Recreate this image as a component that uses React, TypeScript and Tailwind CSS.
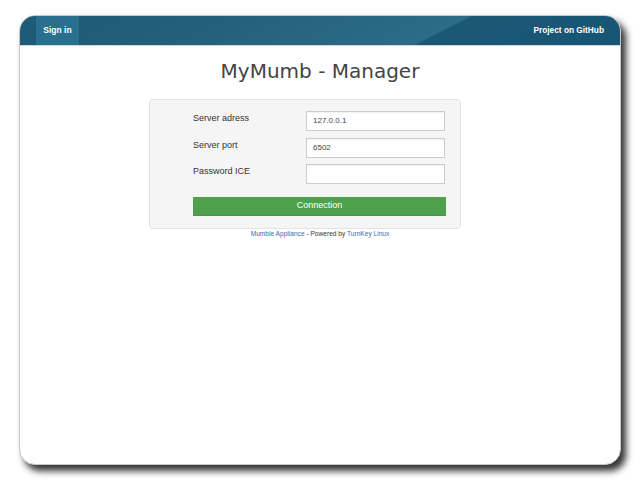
import React from "react";

export default function App() {
  const font = { fontFamily: '"DejaVu Sans", "Liberation Sans", sans-serif' };
  const lib = { fontFamily: '"Liberation Sans", Arial, sans-serif' };
  return (
    <div className="w-[640px] h-[480px] bg-white pt-[15px] pl-[19px]" style={font}>
      <div className="w-[602px] h-[450px] rounded-[16px] overflow-hidden bg-white border border-[#c8c8c8] shadow-[5px_6px_7px_rgba(0,0,0,0.8)] flex flex-col">
        <div className="h-[30px] flex items-stretch justify-between bg-[linear-gradient(153deg,#1d5a75_0%,#235f7b_30%,#2c6c88_68.5%,#1a5876_69%,#175574_100%)] border-b border-[#d5d5d5]">
          <div className="flex items-stretch">
            <div className="w-[16px]" />
            <div className="w-[43px] bg-[#29708f] flex items-center justify-center text-white text-[8.5px] font-bold" style={lib}>
              Sign in
            </div>
          </div>
          <div className="flex items-center pr-[16px] text-white text-[8.3px] font-bold" style={lib}>
            Project on GitHub
          </div>
        </div>
        <div className="flex flex-col">
          <h1 className="mt-[12px] h-[26px] text-center text-[20px] leading-[26px] text-[#444]">
            MyMumb - Manager
          </h1>
          <div className="mt-[15px] ml-[129px] w-[312px] h-[130px] bg-[#f5f5f5] border border-[#e3e3e3] rounded-[4px] pl-[43px] pt-[11px]">
            <div className="flex flex-col gap-[6.5px]">
              {[
                ["Server adress", "127.0.0.1"],
                ["Server port", "6502"],
                ["Password ICE", ""],
              ].map(([label, value]) => (
                <div key={label} className="flex items-start h-[20px]">
                  <div className="w-[113px] text-[9px] text-[#333] pt-[1px] leading-[12px]" style={lib}>{label}</div>
                  <div className="w-[139px] h-[20px] bg-white border border-[#cccccc] flex items-center pl-[6px] text-[8px] text-[#444] shadow-[inset_0_1px_1px_rgba(0,0,0,0.06)]" style={lib}>
                    {value}
                  </div>
                </div>
              ))}
            </div>
            <div className="mt-[13px] w-[253px] h-[19px] bg-[#4fa24b] border-b border-[#47934a] flex items-center justify-center text-white text-[9px]" style={lib}>
              Connection
            </div>
          </div>
          <div className="mt-[0px] text-center text-[6.6px] text-[#333] leading-[10px]" style={lib}>
            <span className="text-[#3a6db3]">Mumble Appliance</span> - Powered by{" "}
            <span className="text-[#3a6db3]">TurnKey Linux</span>
          </div>
        </div>
      </div>
    </div>
  );
}
